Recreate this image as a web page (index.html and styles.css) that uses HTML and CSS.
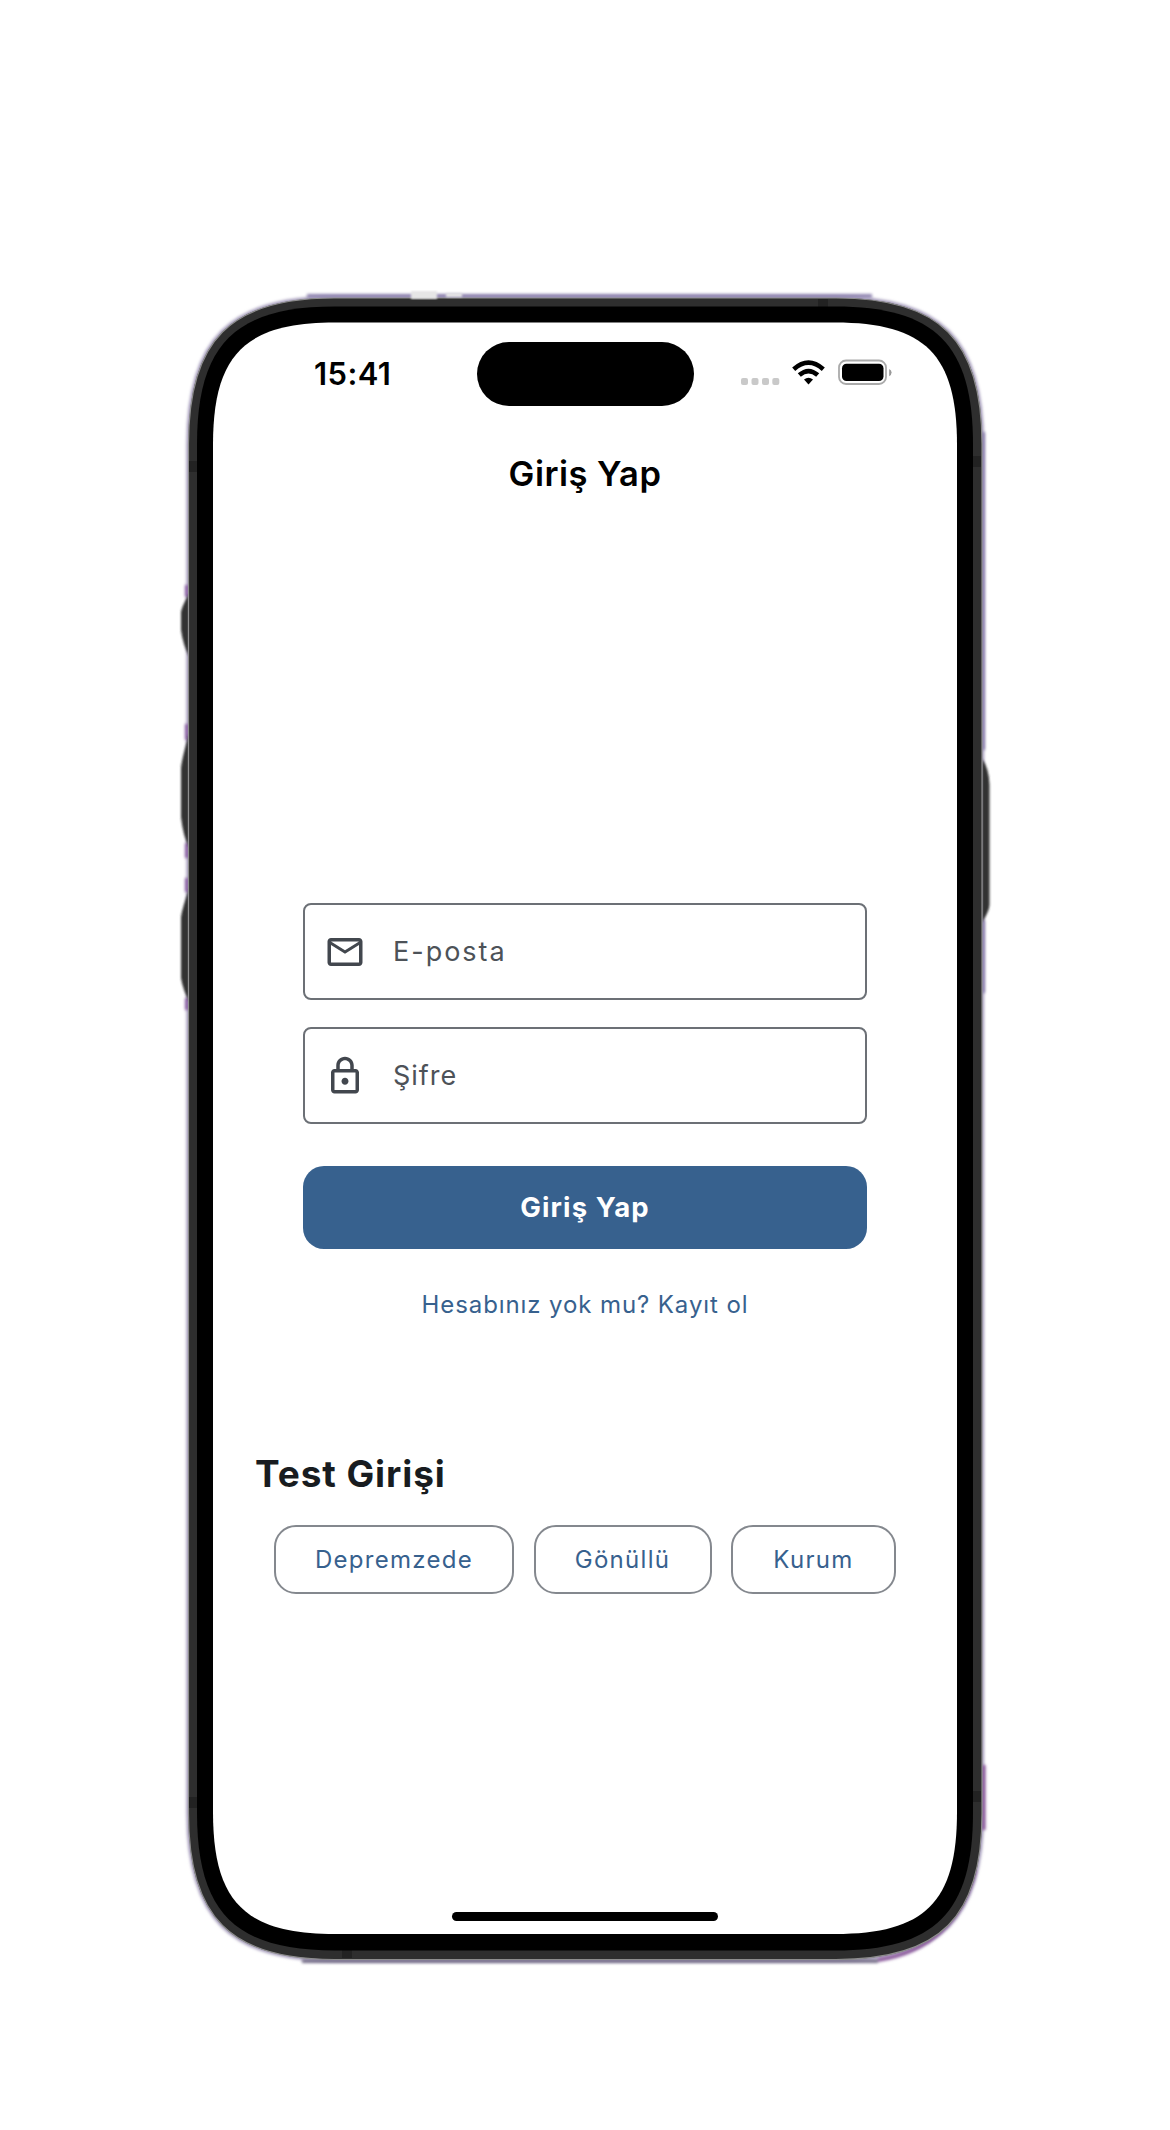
FILE: index.html
```html
<!DOCTYPE html>
<html lang="tr">
<head>
<meta charset="utf-8">
<title>Giriş Yap</title>
<link rel="stylesheet" href="styles.css">
</head>
<body>
<main class="stage">
  <svg class="frame" width="1170" height="2130" viewBox="0 0 1170 2130" aria-hidden="true">
    <defs>
      <filter id="soft" x="-5%" y="-5%" width="110%" height="110%"><feGaussianBlur stdDeviation="1.5"/></filter>
      <filter id="key" x="-100%" y="-10%" width="300%" height="120%"><feGaussianBlur stdDeviation="1.3"/></filter>
    </defs>
    <path d="M188.500 444C188.500 340 230.500 298 334.500 298H836C940 298 982 340 982 444V1813.500C982 1917.500 940 1959.500 836 1959.500H334.500C230.500 1959.500 188.500 1917.500 188.500 1813.500Z" fill="none" stroke="#9d93b5" stroke-width="4" filter="url(#soft)"/>
    <g fill="none" stroke="#8f84b0" stroke-width="4" filter="url(#soft)">
      <path d="M307 296H872M983 432V750M983 920V993"/>
      <path d="M187 585V597M187 724V740M187 843V858M187 878V892M187 998V1010" stroke="#8c62a5"/>
      <path d="M302 1961H878" stroke="#77708a"/>
      <path d="M878 1960Q955 1948 975 1870M983.500 1830V1765" stroke="#8b5a9c"/>
    </g>
    <g fill="#303030" filter="url(#key)">
      <path d="M189 594Q182 606 181 612V630Q183 645 189 656Z"/>
      <path d="M189 734Q182 758 181 768V817Q183 836 189 847Z"/>
      <path d="M189 889Q182 909 181 917V978Q183 990 189 1001Z"/>
      <path d="M982 759Q989 768 989.500 785V905Q989 912 982 922Z"/>
    </g>
    <path d="M188.500 444C188.500 340 230.500 298 334.500 298H836C940 298 982 340 982 444V1813.500C982 1917.500 940 1959.500 836 1959.500H334.500C230.500 1959.500 188.500 1917.500 188.500 1813.500Z" fill="#2e2e2e" stroke="#8d8d8d" stroke-width="1.200"/>
    <path d="M411 291h26v8h-26zM446 293h16v4h-16z" fill="#e6e6e6" filter="url(#key)"/>
    <path d="M189 461h8v11h-8zM973 456h8v11h-8zM189 1797h8v11h-8zM973 1791h8v11h-8zM818 299h10v8h-10zM342 1950h10v8h-10z" fill="#222"/>
    <path d="M197 444.500C197 344.500 235 306.500 335 306.500H835C935 306.500 973 344.500 973 444.500V1812.500C973 1912.500 935 1950.500 835 1950.500H335C235 1950.500 197 1912.500 197 1812.500Z" fill="#000"/>
    <path d="M213 444.700C213 354.700 245 322.500 335 322.500H835C925 322.500 957 354.700 957 444.700V1812C957 1902 925 1934 835 1934H335C245 1934 213 1902 213 1812Z" fill="#fff"/>
  </svg>
  <div class="screen">
    <header class="status">
      <span class="time">15:41</span>
      <span class="island"></span>
      <svg class="indicators" width="156" height="32" viewBox="0 0 156 32" aria-label="Wi-Fi, pil">
        <g fill="#c9c9c9"><rect x="1" y="20" width="7" height="7" rx="2"/><rect x="11.500" y="20" width="7" height="7" rx="2"/><rect x="22" y="20" width="7" height="7" rx="2"/><rect x="32.300" y="20" width="7" height="7" rx="2"/></g>
        <g fill="none" stroke="#000" stroke-width="4.600"><path d="M53.700 11.200Q68.500 -1.900 83.300 11.200"/><path d="M59.300 17.100Q68.500 9 77.700 17.100"/></g>
        <path d="M64 21.500Q68.500 18 73 21.500L68.500 26.400Z"/>
        <rect x="99" y="2.500" width="47" height="23.500" rx="7" fill="none" stroke="#aaa" stroke-width="1.800"/>
        <rect x="102" y="5.700" width="41.500" height="17.300" rx="4.500"/>
        <path d="M149.200 11Q151.600 12.300 151.600 14.500T149.200 18.300Z" fill="#999"/>
      </svg>
    </header>
    <h1 class="title"><span>Giriş Yap</span></h1>
    <form class="login">
      <label class="field">
        <svg width="42" height="42" viewBox="0 0 24 24"><path d="M22 6c0-1.100-.9-2-2-2H4c-1.100 0-2 .9-2 2v12c0 1.100.9 2 2 2h16c1.100 0 2-.9 2-2V6zm-2 0-8 5-8-5h16zm0 12H4V8l8 5 8-5v10z"/></svg>
        <span class="email">E-posta</span>
      </label>
      <label class="field">
        <svg width="42" height="42" viewBox="0 0 24 24"><path d="M18 8h-1V6c0-2.760-2.240-5-5-5S7 3.240 7 6v2H6c-1.100 0-2 .9-2 2v10c0 1.100.9 2 2 2h12c1.100 0 2-.9 2-2V10c0-1.100-.9-2-2-2zM9 6c0-1.660 1.340-3 3-3s3 1.340 3 3v2H9V6zm9 14H6V10h12v10zm-6-3c1.100 0 2-.9 2-2s-.9-2-2-2-2 .9-2 2 .9 2 2 2z"/></svg>
        <span class="password">Şifre</span>
      </label>
      <button class="submit" type="button"><span>Giriş Yap</span></button>
      <a class="register">Hesabınız yok mu? Kayıt ol</a>
    </form>
    <section class="test">
      <h2>Test Girişi</h2>
      <div class="chips">
        <button class="chip victim" type="button">Depremzede</button>
        <button class="chip volunteer" type="button">Gönüllü</button>
        <button class="chip agency" type="button">Kurum</button>
      </div>
    </section>
    <div class="home"></div>
  </div>
</main>
</body>
</html>
```
FILE: styles.css
```css
* { box-sizing: border-box; }
body { margin: 0; background: #fff; font-family: Inter, "Liberation Sans", sans-serif; }
h1, h2 { margin: 0; }
button { font-family: inherit; padding: 0; white-space: nowrap; }
.stage { display: grid; width: 1170px; height: 2130px; }
.frame, .screen { grid-area: 1 / 1; }
.screen { display: flex; flex-direction: column; margin: 323px 213px 196px; color: #000; }

.status { display: grid; grid-template-columns: 263.5px 217px 1fr; height: 83px; padding-top: 19px; }
.time { padding-left: 101px; font-size: 31px; line-height: 63px; font-weight: 600; letter-spacing: .4px; }
.island { height: 63.5px; border-radius: 32px; background: #000; }
.indicators { margin: 16px 0 0 46.5px; }

.title { margin-top: 40px; text-align: center; font-size: 34.5px; line-height: 55px; font-weight: 600; letter-spacing: .5px; }

.login { display: flex; flex-direction: column; width: 564px; margin: 402px auto 0; }
.field { display: flex; align-items: center; height: 97px; margin-bottom: 27px; padding-left: 19px; gap: 27px; border: 2px solid #6c7076; border-radius: 8px; color: #4d5258; font-size: 27px; }
.field svg { fill: #42474e; }
.email { letter-spacing: 2px; font-weight: 400; }
.password { letter-spacing: 1px; font-weight: 400; }
.submit { height: 83px; margin-top: 14.5px; border: 0; border-radius: 21px; background: #37618e; color: #fff; font-size: 27.5px; font-weight: 700; letter-spacing: 1.1px; }
.register { margin-top: 40.5px; text-align: center; font-size: 24px; line-height: 32px; font-weight: 400; color: #37618e; letter-spacing: .9px; }

.test { margin: 129px 0 0 42px; }
.test h2 { color: #181c20; font-size: 37px; line-height: 48px; font-weight: 700; letter-spacing: .9px; }
.chips { display: flex; gap: 19.500px; margin: 27px 0 0 19px; }
.chip { height: 69px; border: 2px solid #84888e; border-radius: 22px; background: none; color: #37618e; font-size: 24px; font-weight: 400; letter-spacing: 1.3px; }
.victim { width: 240px; }
.volunteer { width: 178px; }
.agency { width: 165px; }

.home { width: 266px; height: 9px; margin: auto auto 13px; border-radius: 5px; background: #000; }
```
